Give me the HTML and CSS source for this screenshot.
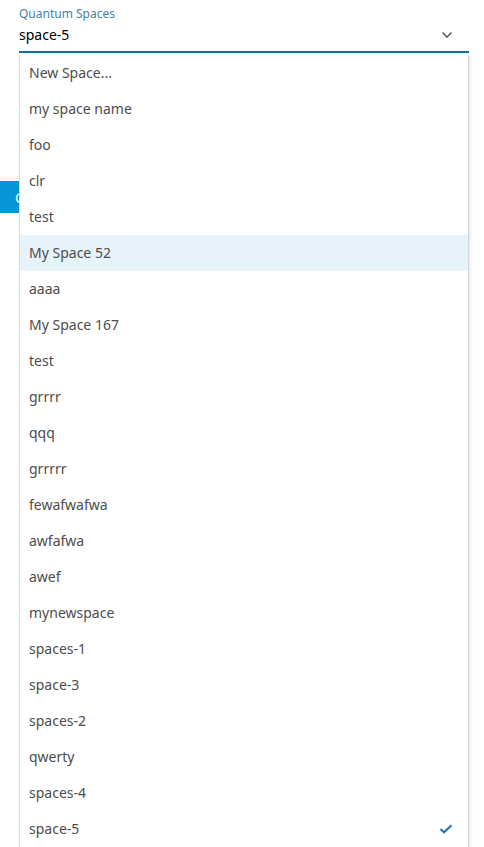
FILE: index.html
```html
<!DOCTYPE html>
<html lang="en">
<head>
<meta charset="utf-8">
<title>Quantum Spaces</title>
<link rel="stylesheet" href="styles.css">
</head>
<body>
<div class="page">
  <div class="field">
    <div class="field-label">Quantum Spaces</div>
    <div class="field-control">
      <span class="field-value">space-5</span>
      <svg class="chevron" width="12" height="8" viewBox="0 0 12 8"><path d="M1.5 1.5 L6 6 L10.5 1.5" fill="none" stroke="#3d4a5a" stroke-width="1.4"/></svg>
    </div>
    <ul class="menu">
      <li class="menu-item">New Space...</li>
      <li class="menu-item">my space name</li>
      <li class="menu-item">foo</li>
      <li class="menu-item">clr</li>
      <li class="menu-item">test</li>
      <li class="menu-item hover">My Space 52</li>
      <li class="menu-item">aaaa</li>
      <li class="menu-item">My Space 167</li>
      <li class="menu-item">test</li>
      <li class="menu-item">grrrr</li>
      <li class="menu-item">qqq</li>
      <li class="menu-item">grrrrr</li>
      <li class="menu-item">fewafwafwa</li>
      <li class="menu-item">awfafwa</li>
      <li class="menu-item">awef</li>
      <li class="menu-item">mynewspace</li>
      <li class="menu-item">spaces-1</li>
      <li class="menu-item">space-3</li>
      <li class="menu-item">spaces-2</li>
      <li class="menu-item">qwerty</li>
      <li class="menu-item">spaces-4</li>
      <li class="menu-item selected"><span>space-5</span><svg class="check" width="14" height="10" viewBox="0 0 14 10"><path d="M1.5 5 L5 8.3 L12.5 1.3" fill="none" stroke="#1a76ad" stroke-width="2"/></svg></li>
    </ul>
  </div>
  <div class="actions">
    <button class="primary-btn">C</button>
  </div>
</div>
</body>
</html>
```

FILE: styles.css
```css
html, body {
  margin: 0;
  padding: 0;
  background: #ffffff;
}
body {
  font-family: "Noto Sans", "Open Sans", sans-serif;
  width: 484px;
  height: 847px;
  overflow: hidden;
}
.field {
  position: relative;
  margin-left: 19px;
  width: 450px;
}
.field-label {
  font-size: 12px;
  line-height: 16px;
  color: #4a7ea6;
  padding-top: 6px;
}
.field-control {
  display: flex;
  align-items: center;
  justify-content: space-between;
  height: 29px;
  border-bottom: 2px solid #0b6fa4;
}
.field-value {
  font-size: 14px;
  color: #000000;
  line-height: 20px;
  margin-top: -3px;
}
.chevron {
  margin-right: 16px;
  margin-top: -3px;
}
.menu {
  position: absolute;
  left: 0;
  top: 55px;
  width: 448px;
  margin: 0;
  padding: 0;
  list-style: none;
  background: #ffffff;
  border-left: 1px solid #dcdcdc;
  border-right: 1px solid #d6d6dc;
  box-shadow: 1px 1px 3px rgba(0, 0, 0, 0.12);
  z-index: 2;
}
.menu-item {
  height: 36px;
  box-sizing: border-box;
  display: flex;
  align-items: center;
  justify-content: space-between;
  padding: 0 15px 1px 9px;
  font-size: 14px;
  color: #4d4d4d;
}
.menu-item.hover {
  background: #e6f3fa;
}
.actions {
  padding-top: 128px;
}
.primary-btn {
  display: block;
  width: 40px;
  height: 32px;
  margin: 0;
  border: none;
  background: #0696d7;
  color: #ffffff;
  font-family: "Noto Sans", sans-serif;
  font-size: 14px;
  text-align: left;
  padding: 0 0 0 15px;
}
```
